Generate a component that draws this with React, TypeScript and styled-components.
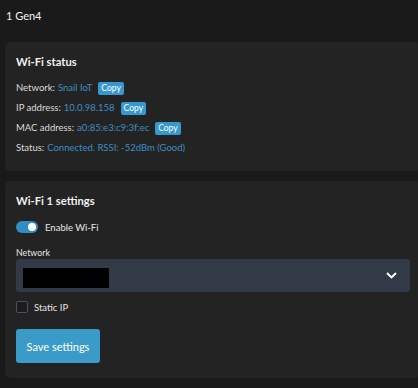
import React from 'react';
import styled, { createGlobalStyle } from 'styled-components';

const GlobalStyle = createGlobalStyle`
  html, body {
    margin: 0;
    padding: 0;
    background: #1a1a1a;
    overflow: hidden;
  }
  body {
    font-family: Lato, 'Open Sans', sans-serif;
    color: #e6e6e6;
  }
`;

const Page = styled.div`
  width: 440px;
  padding: 8px 0 0 5px;
  display: flex;
  flex-direction: column;
  gap: 10px;
`;

const DeviceName = styled.div`
  font-size: 11px;
  line-height: 16px;
  padding: 0 1px 8px;
  color: #f2f2f2;
`;

const Card = styled.section`
  width: 416px;
  box-sizing: border-box;
  background: #232323;
  border-radius: 5px;
  padding: 12px 11px 15px;
`;

const CardTitle = styled.h3`
  margin: 0 0 11px;
  font-size: 11.2px;
  font-weight: 700;
  line-height: 16px;
  color: #f2f2f2;
`;

const InfoList = styled.div`
  margin: 11px 0 1px;
  display: flex;
  flex-direction: column;
  gap: 6px;
`;

const InfoRow = styled.div`
  display: flex;
  align-items: center;
  gap: 3px;
  font-size: 9.5px;
  line-height: 14px;
  color: #dcdcdc;
`;

const Value = styled.span`
  color: #3e8fc4;
`;

const CopyBadge = styled.span`
  margin-left: 3px;
  background: #3598d0;
  color: #fff;
  font-size: 8.5px;
  line-height: 13px;
  padding: 0 3px;
  border-radius: 2px;
`;

const ToggleRow = styled.label`
  display: flex;
  align-items: center;
  gap: 7px;
  height: 14px;
  font-size: 9.5px;
  color: #e6e6e6;
  margin-bottom: 13px;
`;

const Toggle = styled.span<{ on: boolean }>`
  width: 22px;
  height: 12px;
  border-radius: 6px;
  background: ${(p) => (p.on ? '#2f8fc4' : '#444')};
  display: flex;
  align-items: center;
  justify-content: ${(p) => (p.on ? 'flex-end' : 'flex-start')};
  padding: 0 2px;
  box-sizing: border-box;

  &::after {
    content: '';
    width: 8px;
    height: 8px;
    border-radius: 50%;
    background: #fff;
  }
`;

const FieldLabel = styled.div`
  font-size: 8.8px;
  line-height: 12px;
  color: #e6e6e6;
`;

const Select = styled.div`
  height: 33px;
  border-radius: 3px;
  background: #333a47;
  display: flex;
  align-items: center;
  justify-content: space-between;
  padding: 0 13px 0 7px;
  margin-bottom: 8px;
`;

const Redacted = styled.div`
  width: 86px;
  height: 20px;
  background: #000;
  margin-top: 4px;
`;

const CheckRow = styled.label`
  display: flex;
  align-items: center;
  gap: 6px;
  height: 14px;
  font-size: 9.5px;
  color: #e6e6e6;
  margin-bottom: 15px;
`;

const CheckBox = styled.span`
  width: 10px;
  height: 10px;
  border: 1px solid #4a5260;
  border-radius: 2px;
  background: #1c1c1c;
`;

const SaveButton = styled.button`
  width: 84px;
  height: 34px;
  border: none;
  border-radius: 3px;
  background: #3a9bc8;
  color: #fff;
  font-family: inherit;
  font-size: 11px;
`;

const Chevron = () => (
  <svg width="11" height="7" viewBox="0 0 11 7">
    <path d="M1 1l4.5 4.5L10 1" fill="none" stroke="#fff" strokeWidth="1.8" />
  </svg>
);

export default function App() {
  return (
    <>
      <GlobalStyle />
      <Page>
        <DeviceName>1 Gen4</DeviceName>
        <Card>
          <CardTitle>Wi-Fi status</CardTitle>
          <InfoList>
            <InfoRow>
              Network: <Value>Snail IoT</Value>
              <CopyBadge>Copy</CopyBadge>
            </InfoRow>
            <InfoRow>
              IP address: <Value>10.0.98.158</Value>
              <CopyBadge>Copy</CopyBadge>
            </InfoRow>
            <InfoRow>
              MAC address: <Value>a0:85:e3:c9:3f:ec</Value>
              <CopyBadge>Copy</CopyBadge>
            </InfoRow>
            <InfoRow>
              Status: <Value>Connected. RSSI: -52dBm (Good)</Value>
            </InfoRow>
          </InfoList>
        </Card>
        <Card>
          <CardTitle>Wi-Fi 1 settings</CardTitle>
          <ToggleRow>
            <Toggle on />
            Enable Wi-Fi
          </ToggleRow>
          <FieldLabel>Network</FieldLabel>
          <Select>
            <Redacted />
            <Chevron />
          </Select>
          <CheckRow>
            <CheckBox />
            Static IP
          </CheckRow>
          <SaveButton>Save settings</SaveButton>
        </Card>
      </Page>
    </>
  );
}
